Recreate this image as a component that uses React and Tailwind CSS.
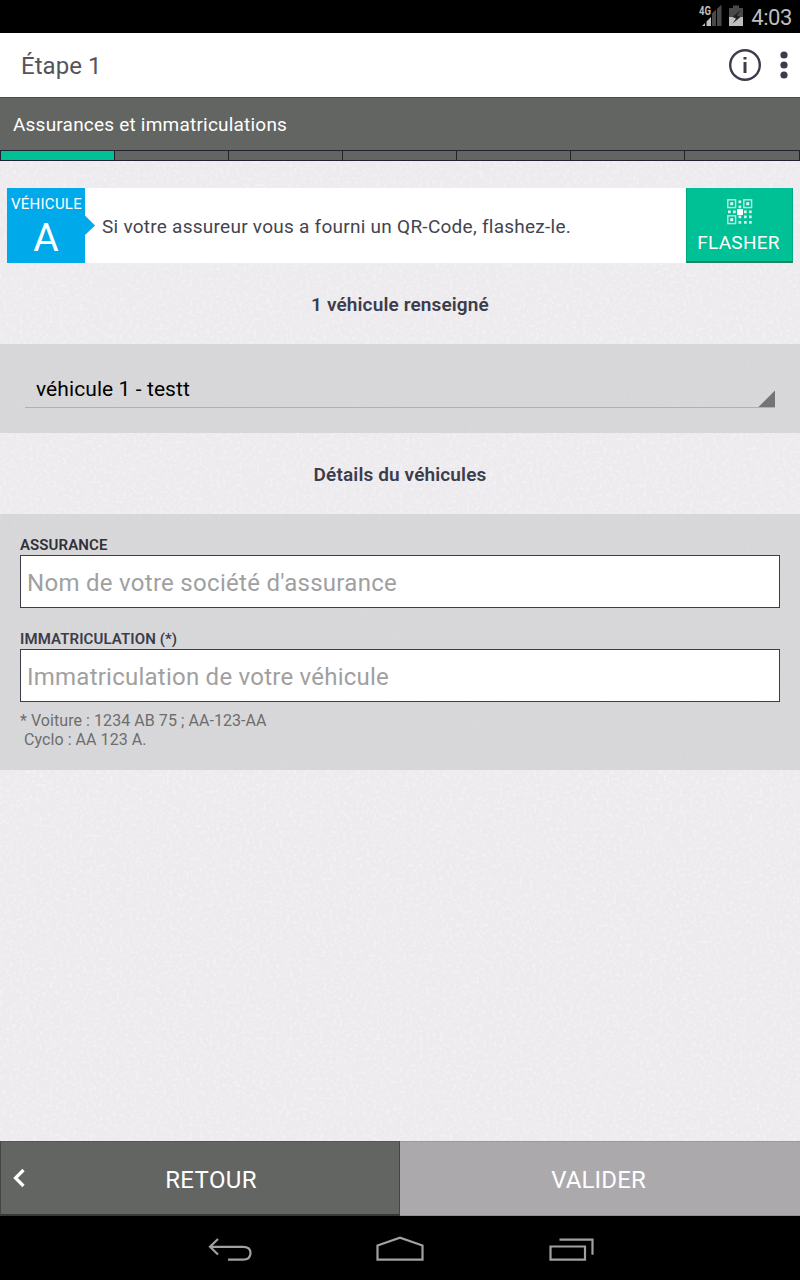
import React from "react";

function StatusBar() {
  return (
    <div className="flex h-[33px] items-start justify-end bg-black pr-[8px] text-[#bebebe]">
      <svg className="mt-[4px] mr-[6px]" width="24" height="24" viewBox="0 0 24 24">
        <path d="M3 22L6 19V22ZM7.500 17.500L12 13V22H7.500Z" fill="#bebebe" />
        <path d="M13 9.500L17 5.500V22H13ZM18 4.800L22.500 0.800V22H18Z" fill="#484a48" />
        <text x="0" y="11.200" fontFamily="Roboto, sans-serif" fontSize="12" fontWeight="700" fill="#bebebe" textLength="12" lengthAdjust="spacingAndGlyphs">4G</text>
      </svg>
      <svg className="mt-[5px] mr-[8px]" width="14" height="22" viewBox="0 0 14 22">
        <path d="M0 3H4V0.500H10V3H14V12H0Z" fill="#484a48" />
        <path d="M0 12H14V21H0Z" fill="#bebebe" />
        <path d="M11.500 5L3.500 12L7 13.500L3.500 18.500L11.500 12L8 10.500Z" fill="#1f211f" />
      </svg>
      <span className="mt-[4px] text-[22px] leading-[28px] tracking-[-0.400px]">4:03</span>
    </div>
  );
}

function Header() {
  return (
    <header className="flex h-16 items-center bg-white pr-[12px] pl-[21px] text-[#3c3c4b]">
      <h1 className="grow pt-[2px] text-[24px] leading-8 tracking-[0.050px] text-[#54545c]">Étape 1</h1>
      <svg className="mr-[18px]" width="34" height="34" viewBox="0 0 34 34">
        <circle cx="17" cy="17" r="14.800" fill="none" stroke="#3c3c4b" strokeWidth="2.400" />
        <path d="M15.500 9H18.500V11.600H15.500ZM15.500 14H18.500V25H15.500Z" fill="#3c3c4b" />
      </svg>
      <svg width="8" height="28" viewBox="0 0 8 28">
        <circle cx="4" cy="4" r="3.600" fill="#3c3c4b" />
        <circle cx="4" cy="14" r="3.600" fill="#3c3c4b" />
        <circle cx="4" cy="24" r="3.600" fill="#3c3c4b" />
      </svg>
    </header>
  );
}

function Progress() {
  return (
    <div className="flex h-[11px] border-y border-l border-[#22222e] bg-[#636562]">
      <div className="w-[114px] shrink-0 border-r border-[#22222e] bg-[#00c096]" />
      {[1, 2, 3, 4, 5].map((n) => (
        <div key={n} className="w-[114px] shrink-0 border-r border-[#22222e]" />
      ))}
      <div className="grow border-r border-[#22222e]" />
    </div>
  );
}

function QrIcon() {
  const dots = [[11, 1], [11, 6], [0.5, 11], [5.5, 11], [16.500, 11], [21.500, 11], [11, 16], [16.500, 16], [21.500, 16], [11, 21.500], [16.500, 21.500], [21.500, 21.500]];
  return (
    <svg width="26" height="26" viewBox="0 0 26 26" fill="#d5f6ee">
      {[[0.800, 0.800], [16.800, 0.800], [0.800, 16.800]].map(([x, y]) => (
        <g key={x + "-" + y}>
          <rect x={x} y={y} width="7.800" height="7.800" fill="none" stroke="#b9efe2" strokeWidth="1.400" />
          <rect x={x + 2.400} y={y + 2.400} width="3" height="3" />
        </g>
      ))}
      {dots.map(([x, y]) => (
        <rect key={x + "," + y} x={x + 0.500} y={y + 0.500} width="2.700" height="2.700" />
      ))}
      <rect x="10" y="10" width="6" height="6" fill="#fff" />
    </svg>
  );
}

function ScanCard() {
  return (
    <section className="mx-[7px] mt-[27px] flex h-[75px] bg-white">
      <div className="flex w-[78px] shrink-0 flex-col items-center bg-[#00a9e9] text-white">
        <span className="mt-[6px] pl-px text-[15px] leading-5 tracking-[0.250px] whitespace-nowrap">VÉHICULE</span>
        <span className="mt-[4px] text-[39px] leading-[40px]">A</span>
      </div>
      <svg className="mt-[27px] shrink-0" width="10" height="21" viewBox="0 0 10 21">
        <path d="M0 0.500L10 10.500L0 20Z" fill="#00a9e9" />
      </svg>
      <p className="ml-[7px] grow self-center pt-[2px] text-[19px] leading-6 tracking-[0.260px] whitespace-nowrap text-[#44444f]">
        Si votre assureur vous a fourni un QR-Code, flashez-le.
      </p>
      <button className="flex h-[75px] w-[107px] shrink-0 flex-col items-center border-x border-b-2 border-x-[#00aa80] border-b-[#198363] bg-[#00c096] pt-[11px] text-white">
        <QrIcon />
        <span className="mt-[6px] -ml-[2px] text-[19px] leading-6 tracking-[0.300px]">FLASHER</span>
      </button>
    </section>
  );
}

function Texture() {
  return (
    <svg className="pointer-events-none absolute inset-0 h-full w-full opacity-[0.350]">
      <filter id="grain" x="0" y="0" width="100%" height="100%">
        <feTurbulence type="fractalNoise" baseFrequency="0.3" numOctaves="2" seed="4" />
        <feColorMatrix type="matrix" values="0 0 0 0 0.960  0 0 0 0 0.960  0 0 0 0 1  5 0 0 0 -2.6" />
      </filter>
      <rect width="100%" height="100%" filter="url(#grain)" />
    </svg>
  );
}

function Heading({ children }) {
  return (
    <h2 className="flex h-[81px] items-center justify-center pt-[3px] text-[19px] font-semibold tracking-[0.130px] text-[#3c3c4b]">{children}</h2>
  );
}

function NavBar() {
  return (
    <nav className="flex h-16 shrink-0 justify-center bg-black">
      <svg width="400" height="64" viewBox="0 0 400 64" fill="none" stroke="#a0a2a0" strokeWidth="2.200">
        <path d="M18 23L10 30.800L18 38.500M10 30.800H43C49 30.800 50.500 33.500 50.500 37C50.500 41.500 48 43.700 43 43.700H28" />
        <path d="M177.500 43.700V29.500L200 21.700L222.500 29.500V43.700Z" />
        <path d="M350.500 30.500H385V43.700H350.500ZM359.500 23.700H392.500V38.700" />
      </svg>
    </nav>
  );
}

export default function App() {
  return (
    <div className="flex h-[1280px] w-[800px] flex-col overflow-hidden bg-[#edebee] font-['Roboto',sans-serif]">
      <StatusBar />
      <Header />
      <div className="flex h-[53px] shrink-0 items-center border-t border-[#4b4b4b] bg-[#636562] pt-px pl-[13px] text-[19px] leading-6 tracking-[0.210px] text-white">
        Assurances et immatriculations
      </div>
      <Progress />

      <main className="relative grow">
        <Texture />
        <div className="relative">
          <ScanCard />
          <Heading>1 véhicule renseigné</Heading>
          <section className="h-[89px] bg-[#cfd0d1]/75 px-[25px] pt-[26px]">
            <div className="flex h-[38px] items-start border-b border-[#aeb1b3] pl-[11px]">
              <span className="mt-[5px] grow text-[21px] leading-[28px] tracking-[0.080px] text-black">véhicule 1 - testt</span>
              <svg className="mt-[20px] -mb-px" width="17" height="18" viewBox="0 0 17 18">
                <path d="M0.500 17L17 0.500V17Z" fill="#737573" />
              </svg>
            </div>
          </section>
          <Heading>Détails du véhicules</Heading>
          <section className="h-[256px] bg-[#cfd0d1]/75 px-5 pt-[21px]">
            <label className="block h-5 text-[15px] leading-5 font-semibold tracking-[0.100px] text-[#303035]">ASSURANCE</label>
            <input
              className="block h-[53px] w-full border border-[#3c3c4b] bg-white px-[6px] pt-[2px] text-[24px] tracking-[0.290px] placeholder:text-[#a0a0a0]"
              placeholder="Nom de votre société d'assurance"
            />
            <label className="mt-[21px] block h-5 text-[15px] leading-5 font-semibold tracking-[0.100px] text-[#3c3c4b]">IMMATRICULATION (*)</label>
            <input
              className="block h-[53px] w-full border border-[#3c3c4b] bg-white px-[6px] pt-[2px] text-[24px] tracking-[0.240px] placeholder:text-[#a0a0a0]"
              placeholder="Immatriculation de votre véhicule"
            />
            <p className="mt-[9px] text-[16px] leading-[19px] tracking-[0.060px] whitespace-pre text-[#6d6d6d]">
              {"* Voiture : 1234 AB 75 ; AA-123-AA\n Cyclo : AA 123 A."}
            </p>
          </section>
        </div>
      </main>

      <footer className="flex h-[75px] shrink-0 text-[24px] text-white">
        <button className="flex w-1/2 items-center border-x border-t border-b-2 border-x-[#444644] border-t-[#555755] border-b-[#363836] bg-[#636562] pl-[11px]">
          <svg width="13" height="20" viewBox="0 0 13 20" fill="none" stroke="#fff" strokeWidth="3.200">
            <path d="M11.500 2L3.500 10L11.500 18" />
          </svg>
          <span className="grow pt-[3px] pr-[2px] text-center tracking-[0.350px]">RETOUR</span>
        </button>
        <button className="w-1/2 border-t border-b border-t-[#999a9c] border-b-[#919294] bg-[#aba9ac] pt-[3px] pr-[3px] tracking-[0.150px]">
          VALIDER
        </button>
      </footer>
      <NavBar />
    </div>
  );
}
